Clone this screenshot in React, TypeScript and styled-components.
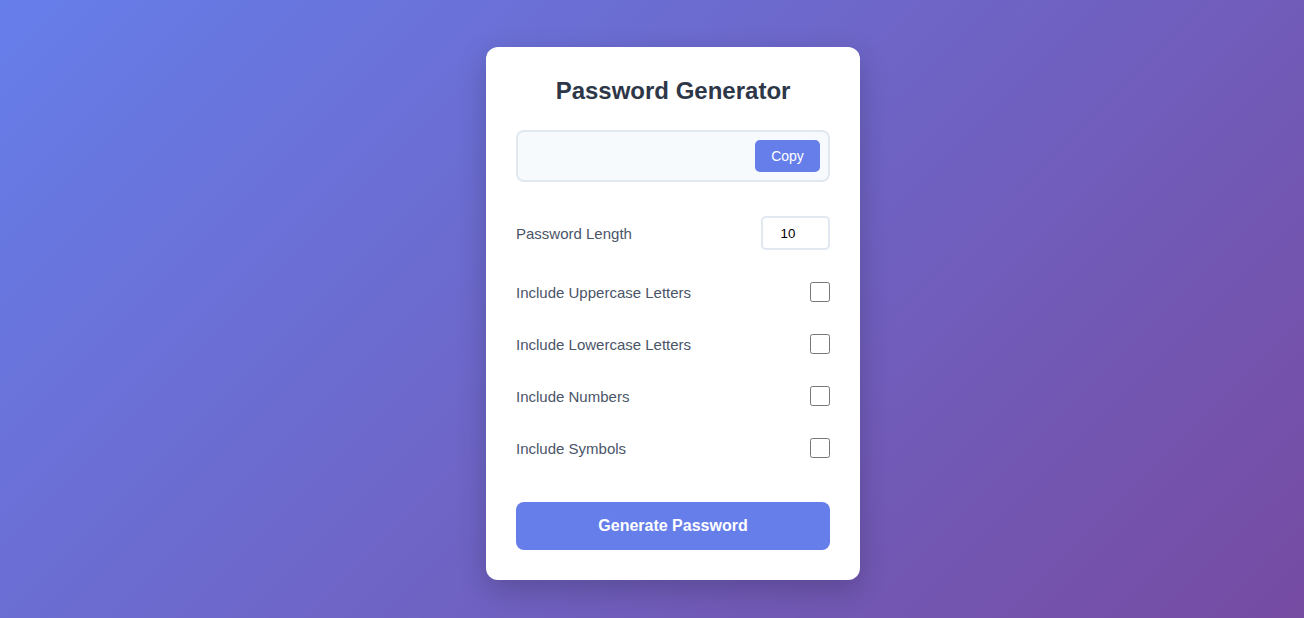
import { useState } from "react";
import styled, { createGlobalStyle } from "styled-components";

const GlobalStyle = createGlobalStyle`
  * {
    box-sizing: border-box;
  }
  html, body {
    margin: 0;
    padding: 0;
  }
  body {
    font-family: "Liberation Sans", Arial, sans-serif;
    background: linear-gradient(135deg, #667eea 0%, #764ba2 100%);
    min-height: 100vh;
  }
`;

const Page = styled.div`
  min-height: 100vh;
  display: flex;
  justify-content: center;
  align-items: flex-start;
  padding: 47px 0 0 42px;
`;

const Card = styled.div`
  width: 374px;
  background: #fff;
  border-radius: 12px;
  padding: 30px;
  box-shadow: 0 10px 30px rgba(0, 0, 0, 0.2);
  display: flex;
  flex-direction: column;
`;

const Title = styled.h1`
  margin: 0 0 25px;
  font-size: 24px;
  line-height: 28px;
  font-weight: 700;
  text-align: center;
  color: #2d3748;
`;

const Output = styled.div`
  height: 52px;
  display: flex;
  align-items: center;
  justify-content: flex-end;
  padding: 0 8px;
  background: #f7fafc;
  border: 2px solid #e2e8f0;
  border-radius: 8px;
  margin-bottom: 34px;
`;

const PasswordText = styled.span`
  flex: 1;
  font-size: 16px;
  color: #2d3748;
  overflow: hidden;
`;

const CopyButton = styled.button`
  width: 65px;
  height: 32px;
  border: none;
  border-radius: 5px;
  background: #667eea;
  color: #fff;
  font-family: inherit;
  font-size: 14px;
  cursor: pointer;
`;

const Options = styled.div`
  display: flex;
  flex-direction: column;
  gap: 32px;
  margin-bottom: 44px;
`;

const Row = styled.label<{ $tall?: boolean }>`
  display: flex;
  align-items: center;
  justify-content: space-between;
  height: ${({ $tall }) => ($tall ? "34px" : "20px")};
  font-size: 15px;
  color: #4a5568;
`;

const LengthInput = styled.input`
  width: 69px;
  height: 34px;
  border: 2px solid #e2e8f0;
  border-radius: 5px;
  padding: 0 8px;
  text-align: center;
  font-family: "Liberation Sans", Arial, sans-serif;
  font-size: 13.33px;
  color: #000;
  outline: none;
`;

const Check = styled.input`
  width: 20px;
  height: 20px;
  margin: 0;
`;

const GenerateButton = styled.button`
  height: 48px;
  border: none;
  border-radius: 8px;
  background: #667eea;
  color: #fff;
  font-family: inherit;
  font-size: 16px;
  font-weight: 700;
  cursor: pointer;
`;

const options = [
  "Include Uppercase Letters",
  "Include Lowercase Letters",
  "Include Numbers",
  "Include Symbols",
];

export default function App() {
  const [length, setLength] = useState("10");
  const [checked, setChecked] = useState<boolean[]>([false, false, false, false]);

  return (
    <>
      <GlobalStyle />
      <Page>
        <Card>
          <Title>Password Generator</Title>
          <Output>
            <PasswordText></PasswordText>
            <CopyButton>Copy</CopyButton>
          </Output>
          <Options>
            <Row $tall>
              Password Length
              <LengthInput
                type="number"
                min={4}
                max={32}
                value={length}
                onChange={(e) => setLength(e.target.value)}
              />
            </Row>
            {options.map((text, i) => (
              <Row key={text}>
                {text}
                <Check
                  type="checkbox"
                  checked={checked[i]}
                  onChange={() =>
                    setChecked(checked.map((c, j) => (j === i ? !c : c)))
                  }
                />
              </Row>
            ))}
          </Options>
          <GenerateButton>Generate Password</GenerateButton>
        </Card>
      </Page>
    </>
  );
}
